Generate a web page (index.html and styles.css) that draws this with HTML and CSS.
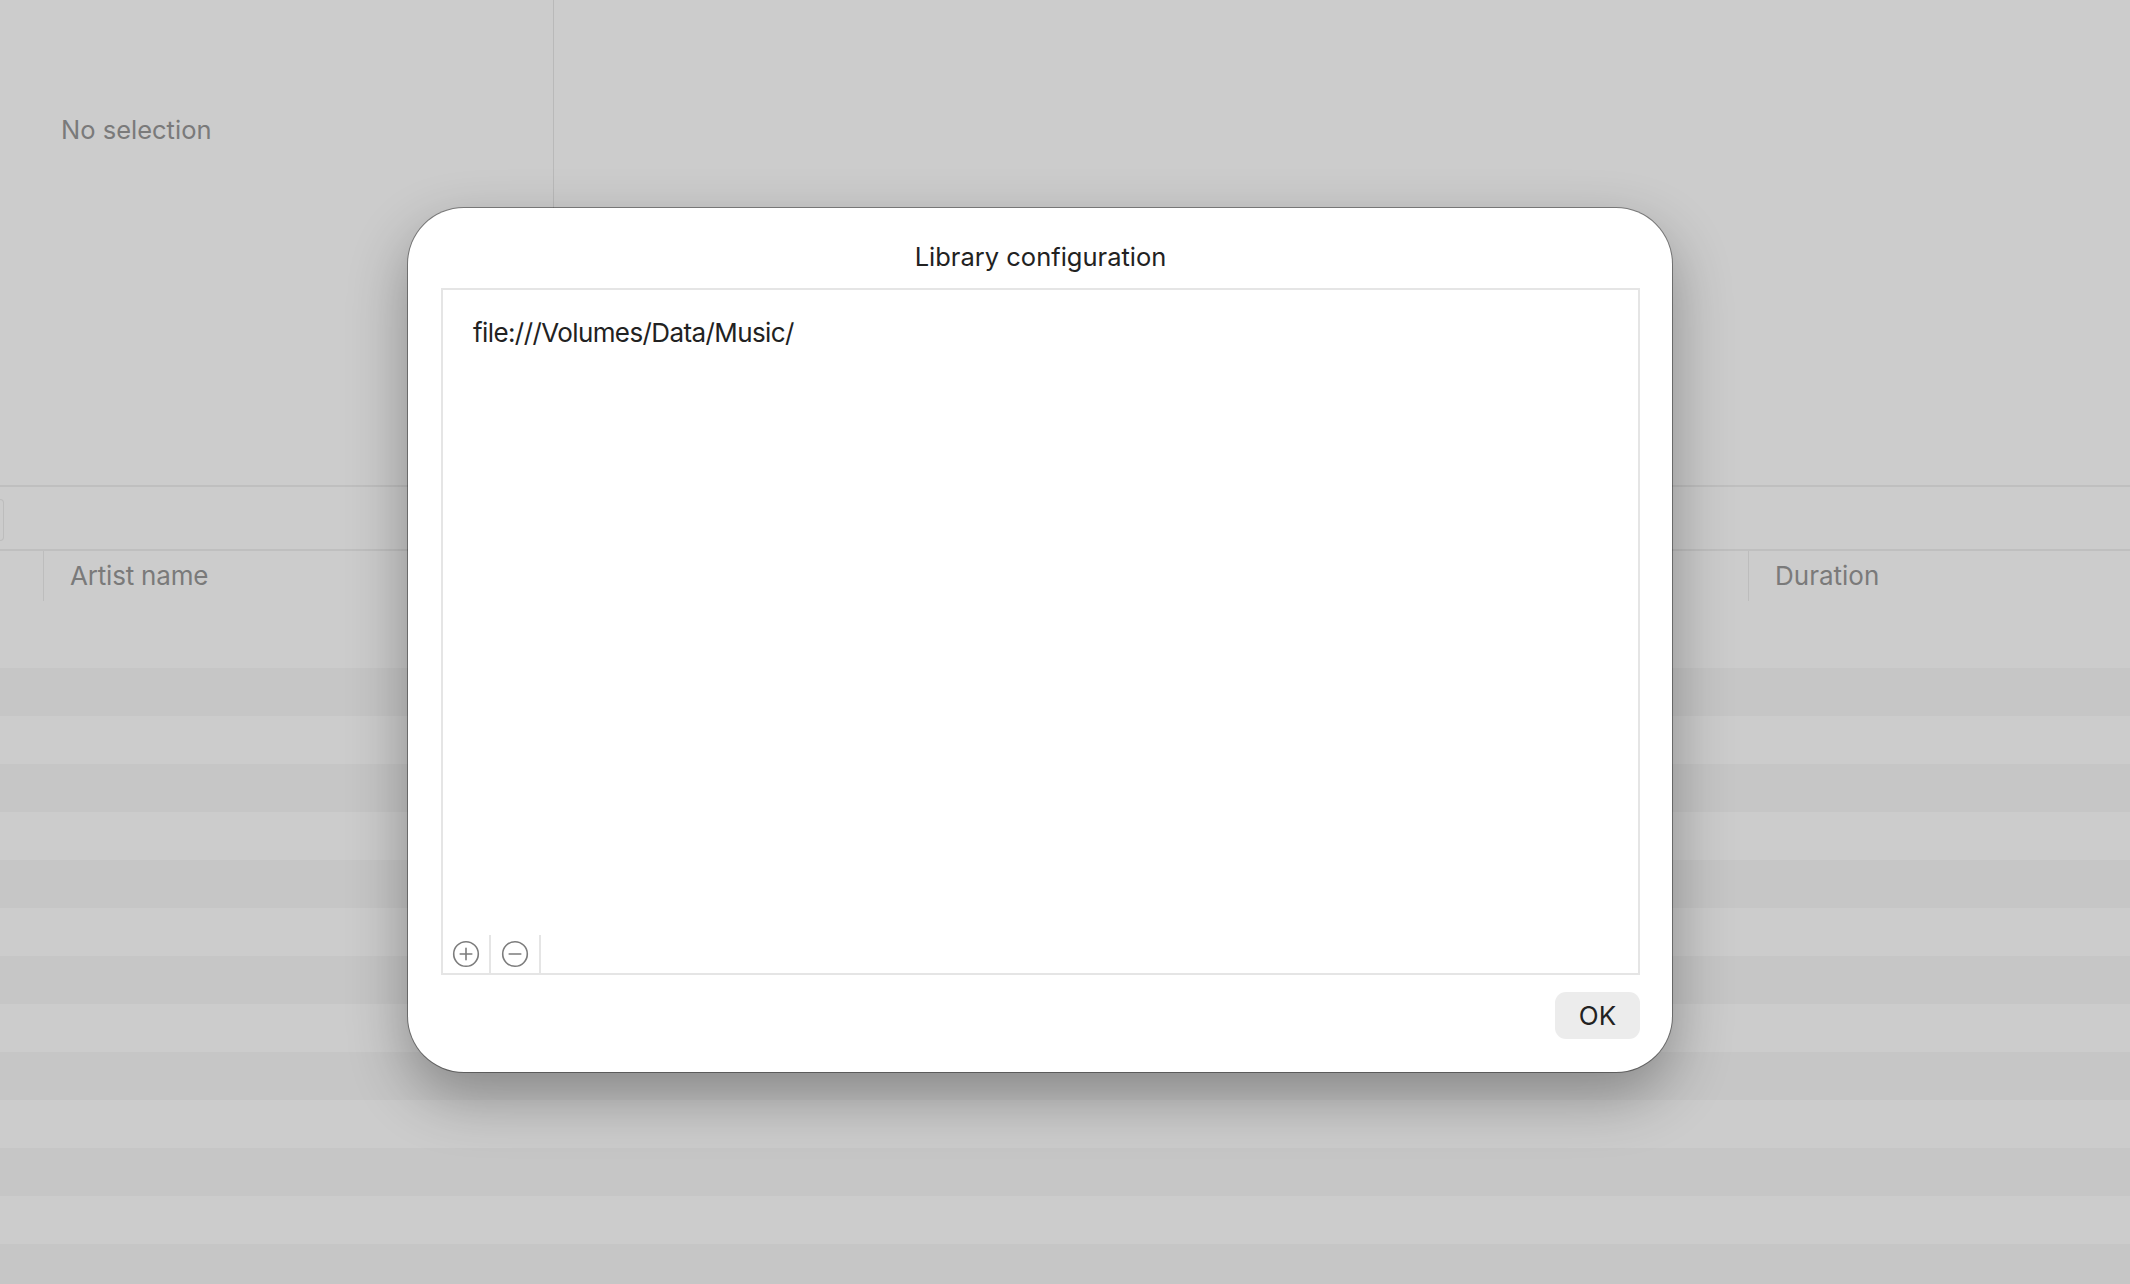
FILE: index.html
```html
<!DOCTYPE html>
<html lang="en">
<head>
    <meta charset="UTF-8">
    <meta name="viewport" content="width=device-width, initial-scale=1.0">
    <title>Library configuration</title>
    <link rel="stylesheet" href="styles.css">
</head>
<body>

<!-- Main window behind the sheet (dimmed) -->
<div class="window">
    <div class="top">
        <aside class="sidebar">
            <p class="empty">No selection</p>
        </aside>
        <section class="detail"></section>
    </div>
    <div class="toolbar"><span class="segment-end"></span></div>
    <div class="table-head">
        <div class="col col-index"></div>
        <div class="col col-artist">Artist name</div>
        <div class="col col-duration">Duration</div>
    </div>
    <div class="rows">
        <div class="row"></div><div class="row"></div><div class="row"></div>
        <div class="row"></div><div class="row"></div><div class="row"></div>
        <div class="row"></div><div class="row"></div><div class="row"></div>
        <div class="row"></div><div class="row"></div><div class="row"></div>
        <div class="row"></div><div class="row"></div>
    </div>
</div>

<!-- Library configuration sheet -->
<div class="sheet">
    <h1 class="sheet-title">Library configuration</h1>
    <div class="folder-list">
        <div class="folder-path">file:///Volumes/Data/Music/</div>
        <div class="list-spacer"></div>
        <div class="list-tools">
            <button class="tool-btn" title="Add folder">
                <svg width="28" height="28" viewBox="0 0 28 28">
                    <circle cx="14" cy="14" r="12.3" fill="none" stroke="#7c7c7c" stroke-width="1.6"/>
                    <path d="M14 8.2v11.6M8.2 14h11.6" stroke="#7c7c7c" stroke-width="1.6" stroke-linecap="round"/>
                </svg>
            </button>
            <button class="tool-btn" title="Remove folder">
                <svg width="28" height="28" viewBox="0 0 28 28">
                    <circle cx="14" cy="14" r="12.3" fill="none" stroke="#7c7c7c" stroke-width="1.6"/>
                    <path d="M8.2 14h11.6" stroke="#7c7c7c" stroke-width="1.6" stroke-linecap="round"/>
                </svg>
            </button>
        </div>
    </div>
    <div class="sheet-actions">
        <button class="ok-btn">OK</button>
    </div>
</div>

</body>
</html>
```

FILE: styles.css
```css
body {
    font-family: Inter, "Noto Sans", sans-serif;
    background-color: #cccccc;
    margin: 0;
    padding: 0;
    width: 2130px;
    height: 1284px;
    overflow: hidden;
}
.window {
    display: flex;
    flex-direction: column;
    height: 100%;
}
.top {
    display: flex;
    flex-shrink: 0;
    height: 485px;
    border-bottom: 2px solid #bfbfbf;
}
.sidebar {
    width: 553px;
    border-right: 1px solid #b9b9b9;
}
.empty {
    margin: 114px 0 0 61px;
    font-size: 25.5px;
    color: #7a7a7a;
}
.toolbar {
    flex-shrink: 0;
    height: 62px;
    border-bottom: 2px solid #bfbfbf;
    display: flex;
    align-items: center;
}
.segment-end {
    width: 3px;
    height: 40px;
    margin-top: 4px;
    border: 1px solid #bdbdbd;
    border-left: none;
    border-radius: 0 8px 8px 0;
}
.table-head {
    display: flex;
    flex-shrink: 0;
    height: 69px;
    color: #7a7a7a;
    font-size: 26px;
}
.col {
    height: 50px;
    line-height: 50px;
    padding-left: 26px;
    box-sizing: border-box;
}
.col-index {
    width: 44px;
    padding: 0;
    border-right: 1px solid #bdbdbd;
}
.col-artist {
    flex: 1;
    letter-spacing: -0.2px;
}
.col-duration {
    width: 382px;
    border-left: 1px solid #bdbdbd;
}
.rows {
    flex: 1;
    overflow: hidden;
}
.row {
    height: 48px;
}
.row:nth-child(even) {
    background-color: #c6c6c6;
}

/* Sheet */
.sheet {
    position: absolute;
    left: 408px;
    top: 208px;
    width: 1264px;
    height: 864px;
    box-sizing: border-box;
    padding: 0 32px 33px 33px;
    background-color: white;
    border-radius: 56px;
    box-shadow: 0 0 0 1px rgba(0, 0, 0, 0.38), 0 24px 60px rgba(0, 0, 0, 0.32);
    display: flex;
    flex-direction: column;
    color: #222222;
}
.sheet-title {
    height: 80px;
    margin: 0;
    padding-top: 34px;
    box-sizing: border-box;
    font-size: 25.5px;
    font-weight: 400;
    text-align: center;
    line-height: 30px;
}
.folder-list {
    flex: 1;
    display: flex;
    flex-direction: column;
    border: 2px solid #e5e5e5;
}
.folder-path {
    padding: 27px 30px 0;
    font-size: 26px;
    line-height: 32px;
    letter-spacing: -0.6px;
}
.list-spacer {
    flex: 1;
}
.list-tools {
    display: flex;
    height: 38px;
}
.tool-btn {
    width: 48px;
    height: 38px;
    padding: 0;
    background: none;
    border: none;
    border-right: 2px solid #e5e5e5;
    display: flex;
    align-items: center;
    justify-content: center;
}
.tool-btn + .tool-btn {
    width: 50px;
}
.sheet-actions {
    display: flex;
    justify-content: flex-end;
    margin-top: 17px;
}
.ok-btn {
    width: 85px;
    height: 47px;
    border: none;
    border-radius: 11px;
    background-color: #ececec;
    color: #222222;
    font-family: Inter, "Noto Sans", sans-serif;
    font-size: 26px;
    padding: 0;
}
```
